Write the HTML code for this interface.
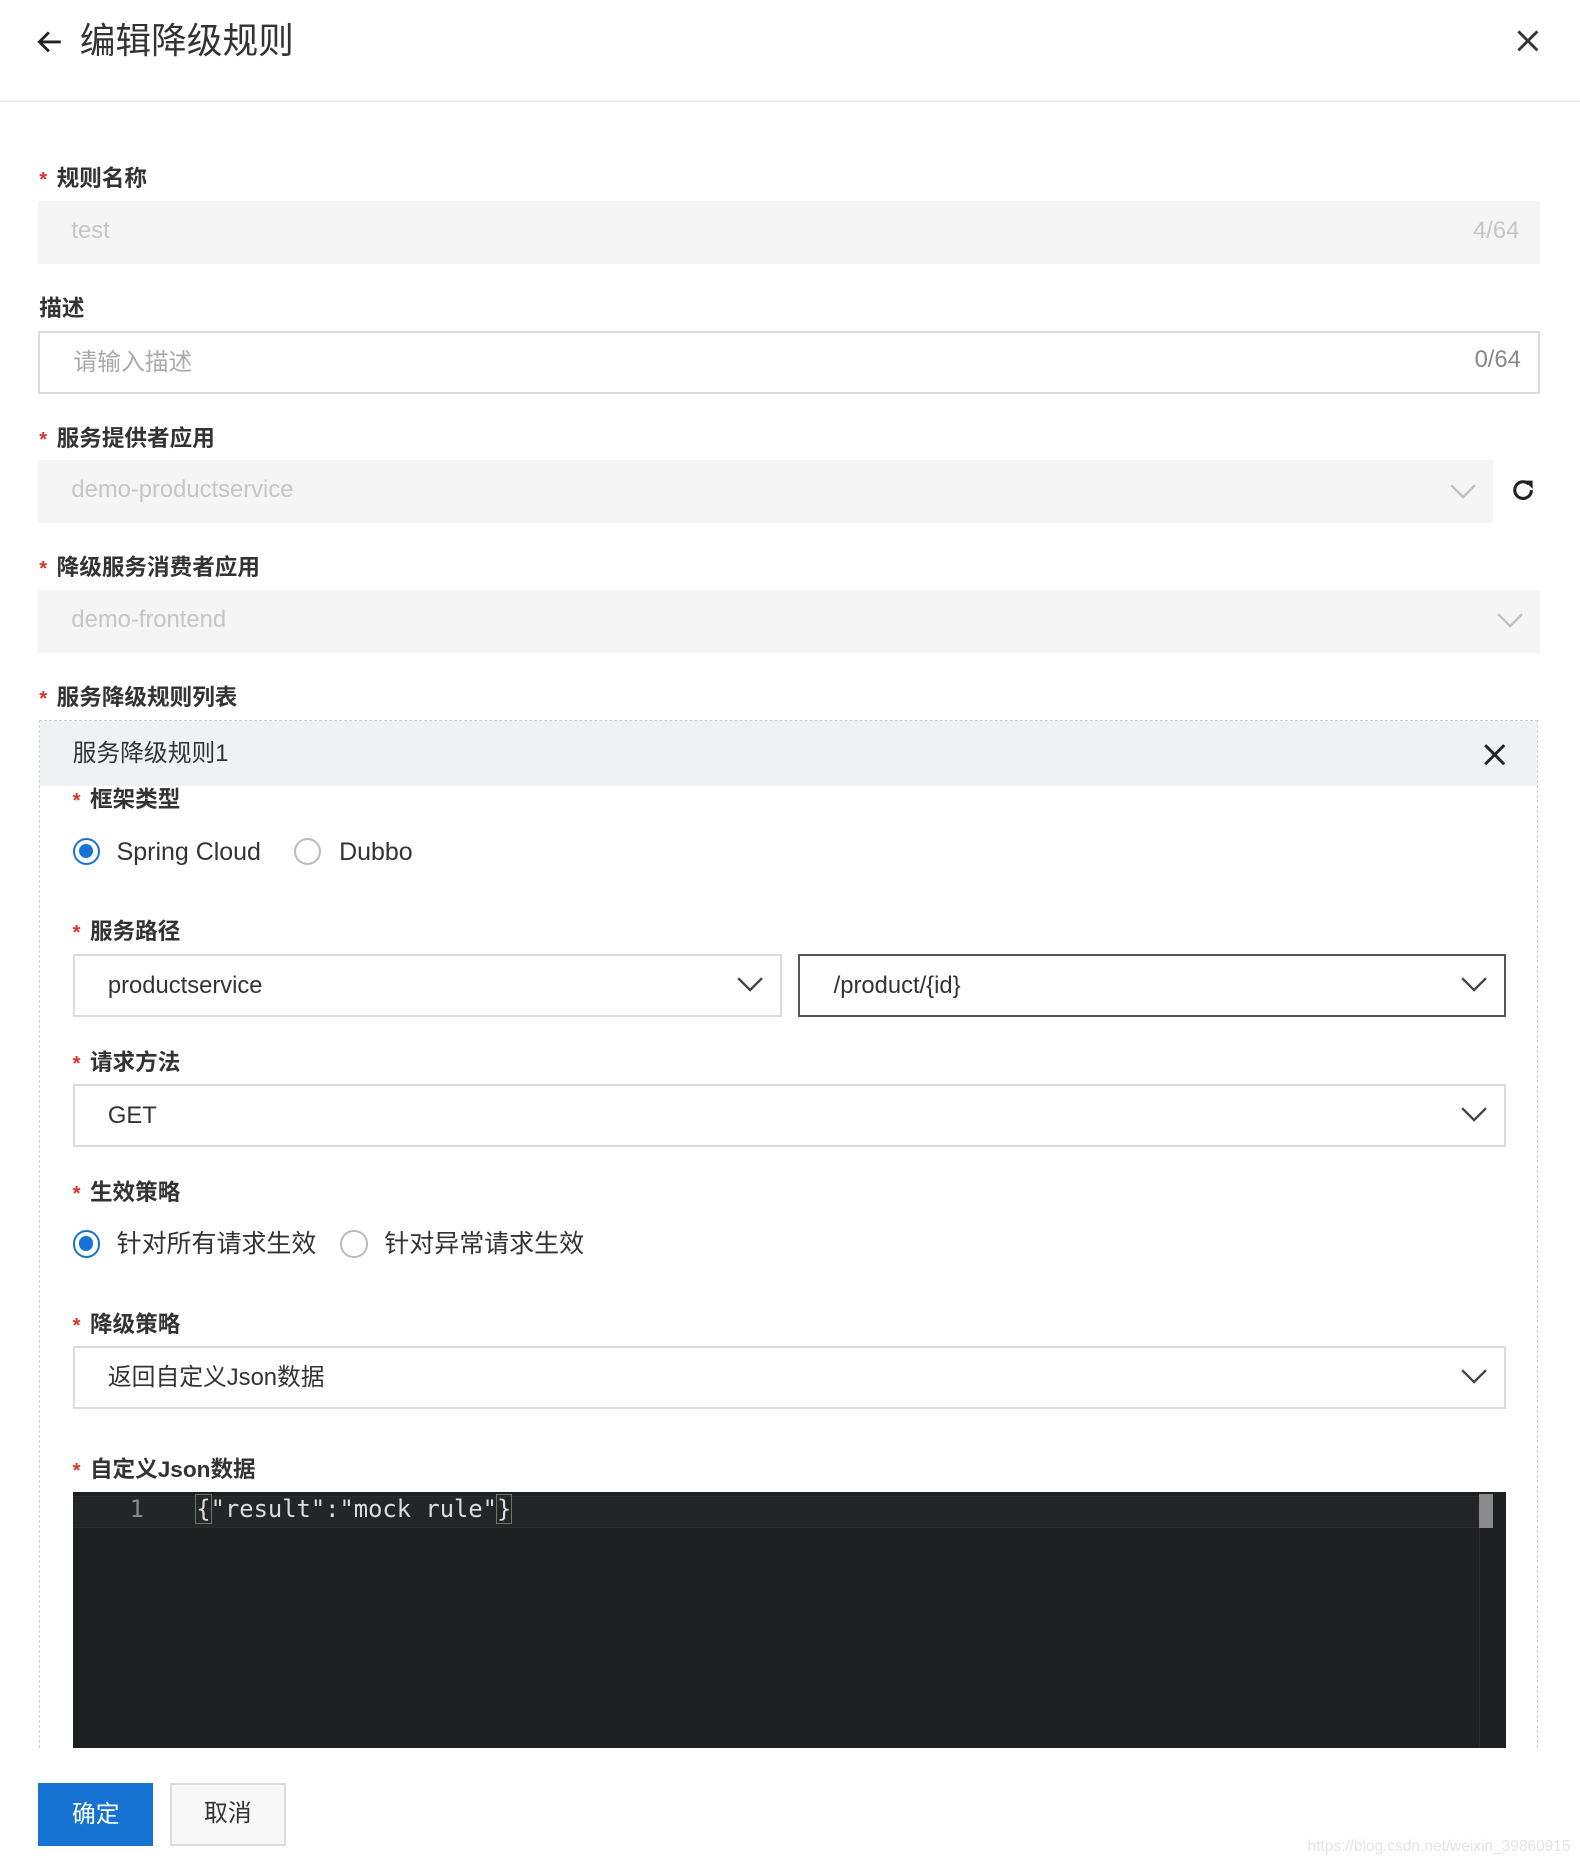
<!DOCTYPE html>
<html><head><meta charset="utf-8"><style>
html,body{margin:0;padding:0;background:#fff;overflow:hidden}
body{width:1580px;height:1866px}
#w{zoom:1.18976;width:1328px;height:1568px;position:relative;font-family:"Liberation Sans","Noto Sans CJK SC",sans-serif;color:#333}
.a{position:absolute}
.lbl{position:absolute;font-size:19px;font-weight:bold;color:#333;line-height:24px}
.lbl i{color:#e0302a;font-style:normal;font-weight:bold;margin-right:8px;font-size:17px}
.box{position:absolute;box-sizing:border-box;height:53px;font-size:20px;line-height:51px;padding-left:28px}
.dis{background:#f5f5f6;color:#c6c6c8}
.brd{border:2px solid #dcdcdc;background:#fff;color:#333}
.chev{position:absolute;top:50%;margin-top:-7px}
.rad{position:absolute;width:23px;height:23px;border-radius:50%;box-sizing:border-box}
.on{border:2px solid #1673d3;background:#fff}
.on:after{content:"";position:absolute;left:3.5px;top:3.5px;width:12px;height:12px;border-radius:50%;background:#1673d3}
.off{border:2px solid #bbb}
.rt{position:absolute;font-size:21px;color:#333;line-height:24px}
</style></head><body><div id="w">
<svg class="a" style="left:31px;top:25px" width="22" height="20" viewBox="0 0 22 20"><path d="M20 10H3M10 2L2 10l8 8" fill="none" stroke="#222" stroke-width="2.4"/></svg>
<div class="a" style="left:67px;top:16px;font-size:30px;color:#333;line-height:38px">编辑降级规则</div>
<svg class="a" style="left:1274px;top:24px" width="20" height="20" viewBox="0 0 20 20"><path d="M2 2L18 18M18 2L2 18" stroke="#333" stroke-width="2.4"/></svg>
<div class="a" style="left:0;top:84px;width:1328px;height:2px;background:#eeeeef"></div>

<div class="lbl" style="left:33px;top:139px"><i>*</i>规则名称</div>
<div class="box dis" style="left:32px;top:169px;width:1262px">test<span class="a" style="right:17px;top:0">4/64</span></div>

<div class="lbl" style="left:33px;top:248px">描述</div>
<div class="box brd" style="left:32px;top:278px;width:1262px;color:#aaa">请输入描述<span class="a" style="right:14px;top:-2px;color:#888">0/64</span></div>

<div class="lbl" style="left:33px;top:357px"><i>*</i>服务提供者应用</div>
<div class="box dis" style="left:32px;top:387px;width:1223px">demo-productservice<svg class="chev" style="right:14px" width="22" height="13" viewBox="0 0 22 13"><path d="M1 1l10 10L21 1" fill="none" stroke="#c0c0c2" stroke-width="2"/></svg></div>
<svg class="a" style="left:1269px;top:401px" width="22" height="22" viewBox="0 0 22 22"><path d="M18 11A7 7 0 1 1 15.9 6" fill="none" stroke="#222" stroke-width="2.6"/><path d="M12 3h7v7z" fill="#222"/></svg>

<div class="lbl" style="left:33px;top:466px"><i>*</i>降级服务消费者应用</div>
<div class="box dis" style="left:32px;top:496px;width:1262px">demo-frontend<svg class="chev" style="right:14px" width="22" height="13" viewBox="0 0 22 13"><path d="M1 1l10 10L21 1" fill="none" stroke="#c0c0c2" stroke-width="2"/></svg></div>

<div class="lbl" style="left:33px;top:575px"><i>*</i>服务降级规则列表</div>
<div class="a" style="left:33px;top:605px;width:1260px;height:864px;box-sizing:border-box;border:1px dashed #d0d0d2;border-bottom:none"></div>
<div class="a" style="left:34px;top:606px;width:1258px;height:55px;background:#f0f1f3"></div>
<div class="a" style="left:61px;top:622px;font-size:20px;line-height:24px;color:#333">服务降级规则1</div>
<svg class="a" style="left:1247px;top:625px" width="18" height="18" viewBox="0 0 18 18"><path d="M1 1L17 17M17 1L1 17" stroke="#222" stroke-width="2.4"/></svg>

<div class="lbl" style="left:61px;top:661px"><i>*</i>框架类型</div>
<div class="rad on" style="left:61px;top:704px"></div><div class="rt" style="left:98px;top:704px">Spring Cloud</div>
<div class="rad off" style="left:247px;top:704px"></div><div class="rt" style="left:285px;top:704px">Dubbo</div>

<div class="lbl" style="left:61px;top:772px"><i>*</i>服务路径</div>
<div class="box brd" style="left:61px;top:802px;width:596px">productservice<svg class="chev" style="right:14px" width="22" height="13" viewBox="0 0 22 13"><path d="M1 1l10 10L21 1" fill="none" stroke="#444" stroke-width="2"/></svg></div>
<div class="box brd" style="left:671px;top:802px;width:595px;border-color:#555">/product/{id}<svg class="chev" style="right:14px" width="22" height="13" viewBox="0 0 22 13"><path d="M1 1l10 10L21 1" fill="none" stroke="#444" stroke-width="2"/></svg></div>

<div class="lbl" style="left:61px;top:882px"><i>*</i>请求方法</div>
<div class="box brd" style="left:61px;top:911px;width:1205px">GET<svg class="chev" style="right:14px" width="22" height="13" viewBox="0 0 22 13"><path d="M1 1l10 10L21 1" fill="none" stroke="#444" stroke-width="2"/></svg></div>

<div class="lbl" style="left:61px;top:991px"><i>*</i>生效策略</div>
<div class="rad on" style="left:61px;top:1034px"></div><div class="rt" style="left:98px;top:1034px">针对所有请求生效</div>
<div class="rad off" style="left:286px;top:1034px"></div><div class="rt" style="left:323px;top:1034px">针对异常请求生效</div>

<div class="lbl" style="left:61px;top:1102px"><i>*</i>降级策略</div>
<div class="box brd" style="left:61px;top:1131px;width:1205px">返回自定义Json数据<svg class="chev" style="right:14px" width="22" height="13" viewBox="0 0 22 13"><path d="M1 1l10 10L21 1" fill="none" stroke="#444" stroke-width="2"/></svg></div>

<div class="lbl" style="left:61px;top:1224px"><i>*</i>自定义Json数据</div>
<div class="a" style="left:61px;top:1254px;width:1205px;height:215px;background:#1e1f21">
  <div class="a" style="left:0;top:3px;width:1182px;height:26px;background:#242527;border-top:1px solid #2c2d2f;border-bottom:1px solid #2c2d2f"></div>
  <div class="a" style="left:1182px;top:0;width:1px;height:215px;background:#2a2b2d"></div>
  <div class="a" style="left:1182px;top:2px;width:12px;height:28px;background:#8a8a8a"></div>
  <div class="a" style="left:48px;top:2px;font-family:'DejaVu Sans Mono','Liberation Mono',monospace;font-size:20px;line-height:26px;color:#888">1</div>
  <div class="a" style="left:104px;top:2px;font-family:'DejaVu Sans Mono','Liberation Mono',monospace;font-size:20px;line-height:26px;color:#ddd;white-space:pre"><span style="outline:1px solid #6a7a6a">{</span>"result":"mock rule"<span style="outline:1px solid #6a7a6a">}</span></div>
</div>

<div class="a" style="left:32px;top:1499px;width:97px;height:53px;background:#1673d3;color:#fff;font-size:20px;line-height:53px;text-align:center">确定</div>
<div class="a" style="left:143px;top:1499px;width:97px;height:53px;box-sizing:border-box;background:#f8f8f9;border:2px solid #dcdcdc;color:#333;font-size:20px;line-height:49px;text-align:center">取消</div>
<div class="a" style="right:8px;top:1545px;font-size:13px;color:#e4e4e4">https://blog.csdn.net/weixin_39860915</div>
</div></body></html>
